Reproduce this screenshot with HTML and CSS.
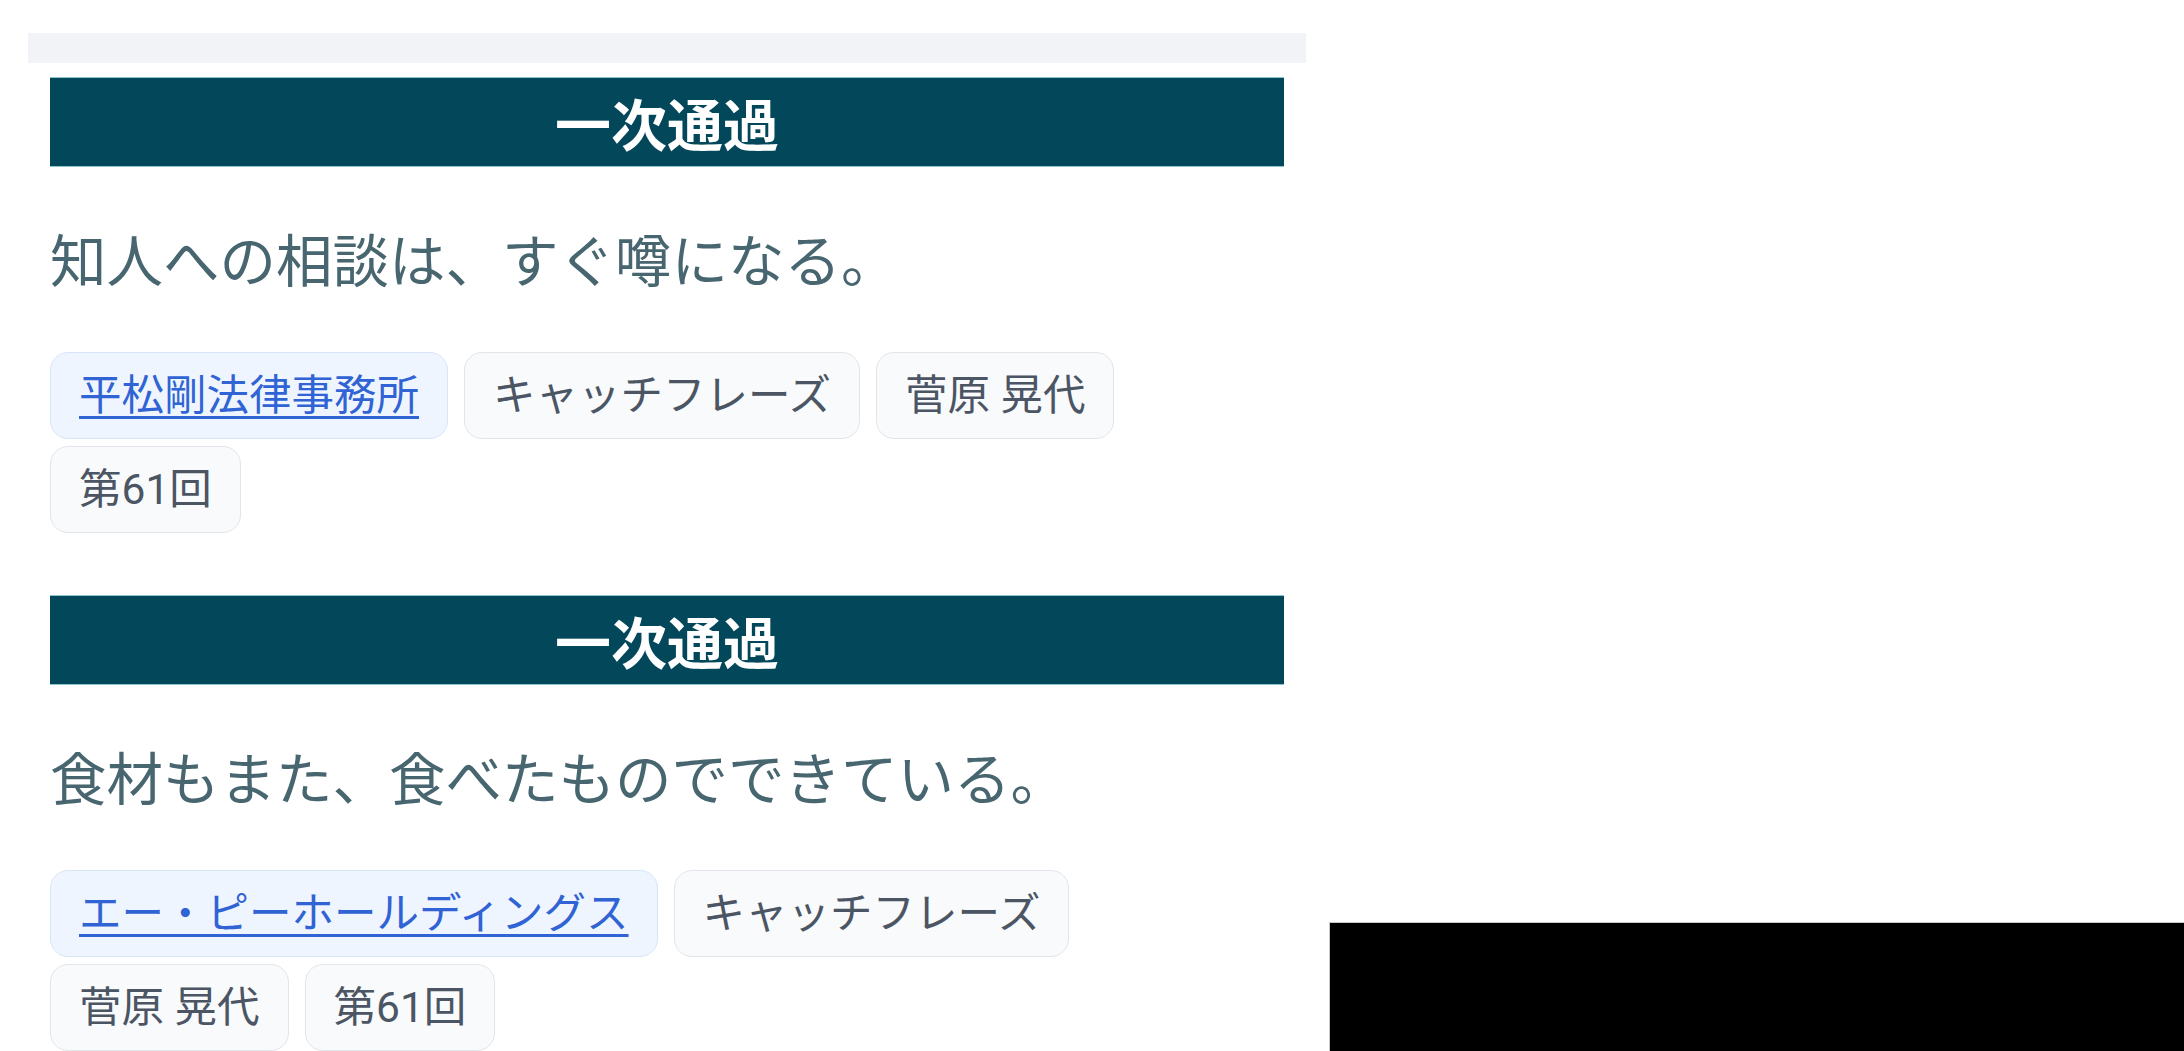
FILE: index.html
```html
<!DOCTYPE html>
<html lang="ja">
<head>
<meta charset="utf-8">
<title>一次通過</title>
<link rel="stylesheet" href="styles.css">
</head>
<body>
<div class="page">
  <div class="top-bar"></div>
  <div class="list">
    <section class="entry">
      <h2 class="entry-head">一次通過</h2>
      <p class="phrase">知人への相談は、すぐ噂になる。</p>
      <div class="tags">
        <a class="tag tag-link" href="#">平松剛法律事務所</a>
        <span class="tag">キャッチフレーズ</span>
        <span class="tag">菅原 晃代</span>
        <span class="tag">第61回</span>
      </div>
    </section>
    <section class="entry">
      <h2 class="entry-head">一次通過</h2>
      <p class="phrase">食材もまた、食べたものでできている。</p>
      <div class="tags">
        <a class="tag tag-link" href="#">エー・ピーホールディングス</a>
        <span class="tag">キャッチフレーズ</span>
        <span class="tag">菅原 晃代</span>
        <span class="tag">第61回</span>
      </div>
    </section>
  </div>
</div>
<div class="player"></div>
</body>
</html>
```

FILE: styles.css
```css
html, body {
  margin: 0;
  padding: 0;
  background: #ffffff;
  font-family: Roboto, "Noto Sans CJK JP", "Noto Sans", sans-serif;
}

.page {
  width: 1278px;
  margin-left: 28px;
  padding-top: 33px;
}

.top-bar {
  height: 30px;
  background: #f2f3f6;
}

.list {
  padding: 14px 22px 0;
}

.entry {
  margin-bottom: 62px;
}

.entry-head {
  margin: 0;
  height: 88px;
  line-height: 88px;
  background: #03475a;
  border-top: 1px solid #8cc3cf;
  border-bottom: 1px solid #8cc3cf;
  color: #ffffff;
  text-align: center;
  font-family: "Noto Sans CJK JP", sans-serif;
  font-weight: 700;
  font-size: 56px;
}

.phrase {
  margin: 0;
  padding-top: 48px;
  line-height: 84px;
  font-family: "Noto Sans CJK JP", sans-serif;
  font-size: 56.5px;
  color: #476670;
  white-space: nowrap;
}

.tags {
  margin-top: 53px;
  display: flex;
  flex-wrap: wrap;
  gap: 7px 16px;
}

.tag {
  display: inline-block;
  padding: 10px 28px;
  line-height: 65px;
  font-size: 42.5px;
  color: #4b5563;
  background: #f8fafc;
  border: 1.5px solid #e2e5ea;
  border-radius: 18px;
  white-space: nowrap;
}

.tag-link {
  color: #3063d4;
  background: #eff5fe;
  border-color: #d8e5f8;
  text-decoration: underline;
  text-decoration-thickness: 3px;
  text-underline-offset: 6px;
}

.player {
  position: fixed;
  right: 0;
  bottom: 0;
  width: 854px;
  height: 128px;
  background: #000000;
  border-top: 1px solid #c9c9c9;
  border-left: 1px solid #c9c9c9;
}
```
